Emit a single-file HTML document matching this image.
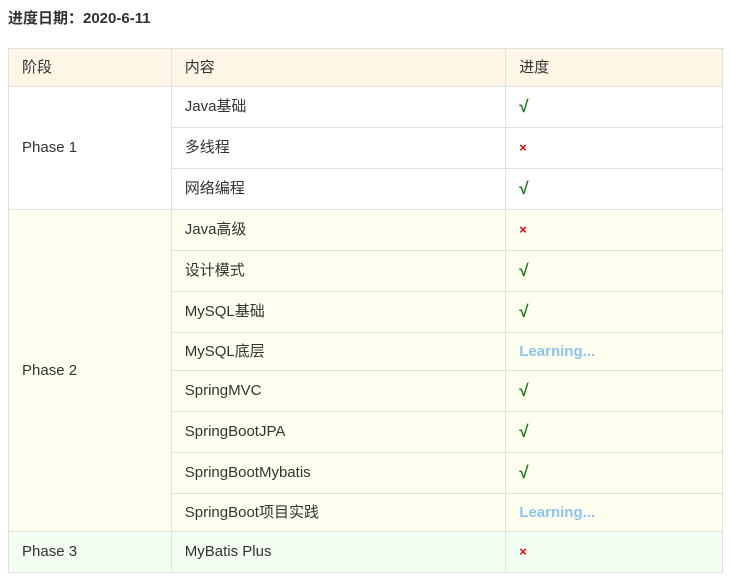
<!DOCTYPE html>
<html><head><meta charset="utf-8"><style>
body{margin:0;background:#fff;font-family:"Liberation Sans","Noto Sans CJK SC",sans-serif;color:#333;width:732px;height:581px;overflow:hidden}
h3{position:absolute;left:8px;top:8px;margin:0;font-size:15px;font-weight:bold;color:#333;line-height:22px}
table{position:absolute;left:8px;top:48px;border-collapse:collapse;width:715px;font-size:15px}
td,th{border:1px solid #e0e0e0;padding:0 0 0 13px;text-align:left;font-weight:normal;box-sizing:border-box;line-height:20px}
th{background:#fdf5e6}
.p1 td{background:#fff}
.p2 td{background:#fffff0}
.p3 td{background:#f2fff2}
.ok{color:#1a7a1a;font-weight:bold;font-size:17px}
.no{color:#e00;font-size:13px;font-weight:bold}
.l{color:#8cc4ef;font-weight:bold}
</style></head><body>
<h3>进度日期：2020-6-11</h3>
<table>
<colgroup><col style="width:163px"><col style="width:335px"><col style="width:217px"></colgroup>
<tr style="height:38px"><th>阶段</th><th>内容</th><th>进度</th></tr>
<tr class="p1" style="height:41px"><td rowspan="3">Phase 1</td><td>Java基础</td><td class="ok">√</td></tr>
<tr class="p1" style="height:41px"><td>多线程</td><td class="no">×</td></tr>
<tr class="p1" style="height:41px"><td>网络编程</td><td class="ok">√</td></tr>
<tr class="p2" style="height:41px"><td rowspan="8">Phase 2</td><td>Java高级</td><td class="no">×</td></tr>
<tr class="p2" style="height:41px"><td>设计模式</td><td class="ok">√</td></tr>
<tr class="p2" style="height:41px"><td>MySQL基础</td><td class="ok">√</td></tr>
<tr class="p2" style="height:38px"><td>MySQL底层</td><td class="l">Learning...</td></tr>
<tr class="p2" style="height:41px"><td>SpringMVC</td><td class="ok">√</td></tr>
<tr class="p2" style="height:41px"><td>SpringBootJPA</td><td class="ok">√</td></tr>
<tr class="p2" style="height:41px"><td>SpringBootMybatis</td><td class="ok">√</td></tr>
<tr class="p2" style="height:38px"><td>SpringBoot项目实践</td><td class="l">Learning...</td></tr>
<tr class="p3" style="height:41px"><td>Phase 3</td><td>MyBatis Plus</td><td class="no">×</td></tr>
</table>
</body></html>
